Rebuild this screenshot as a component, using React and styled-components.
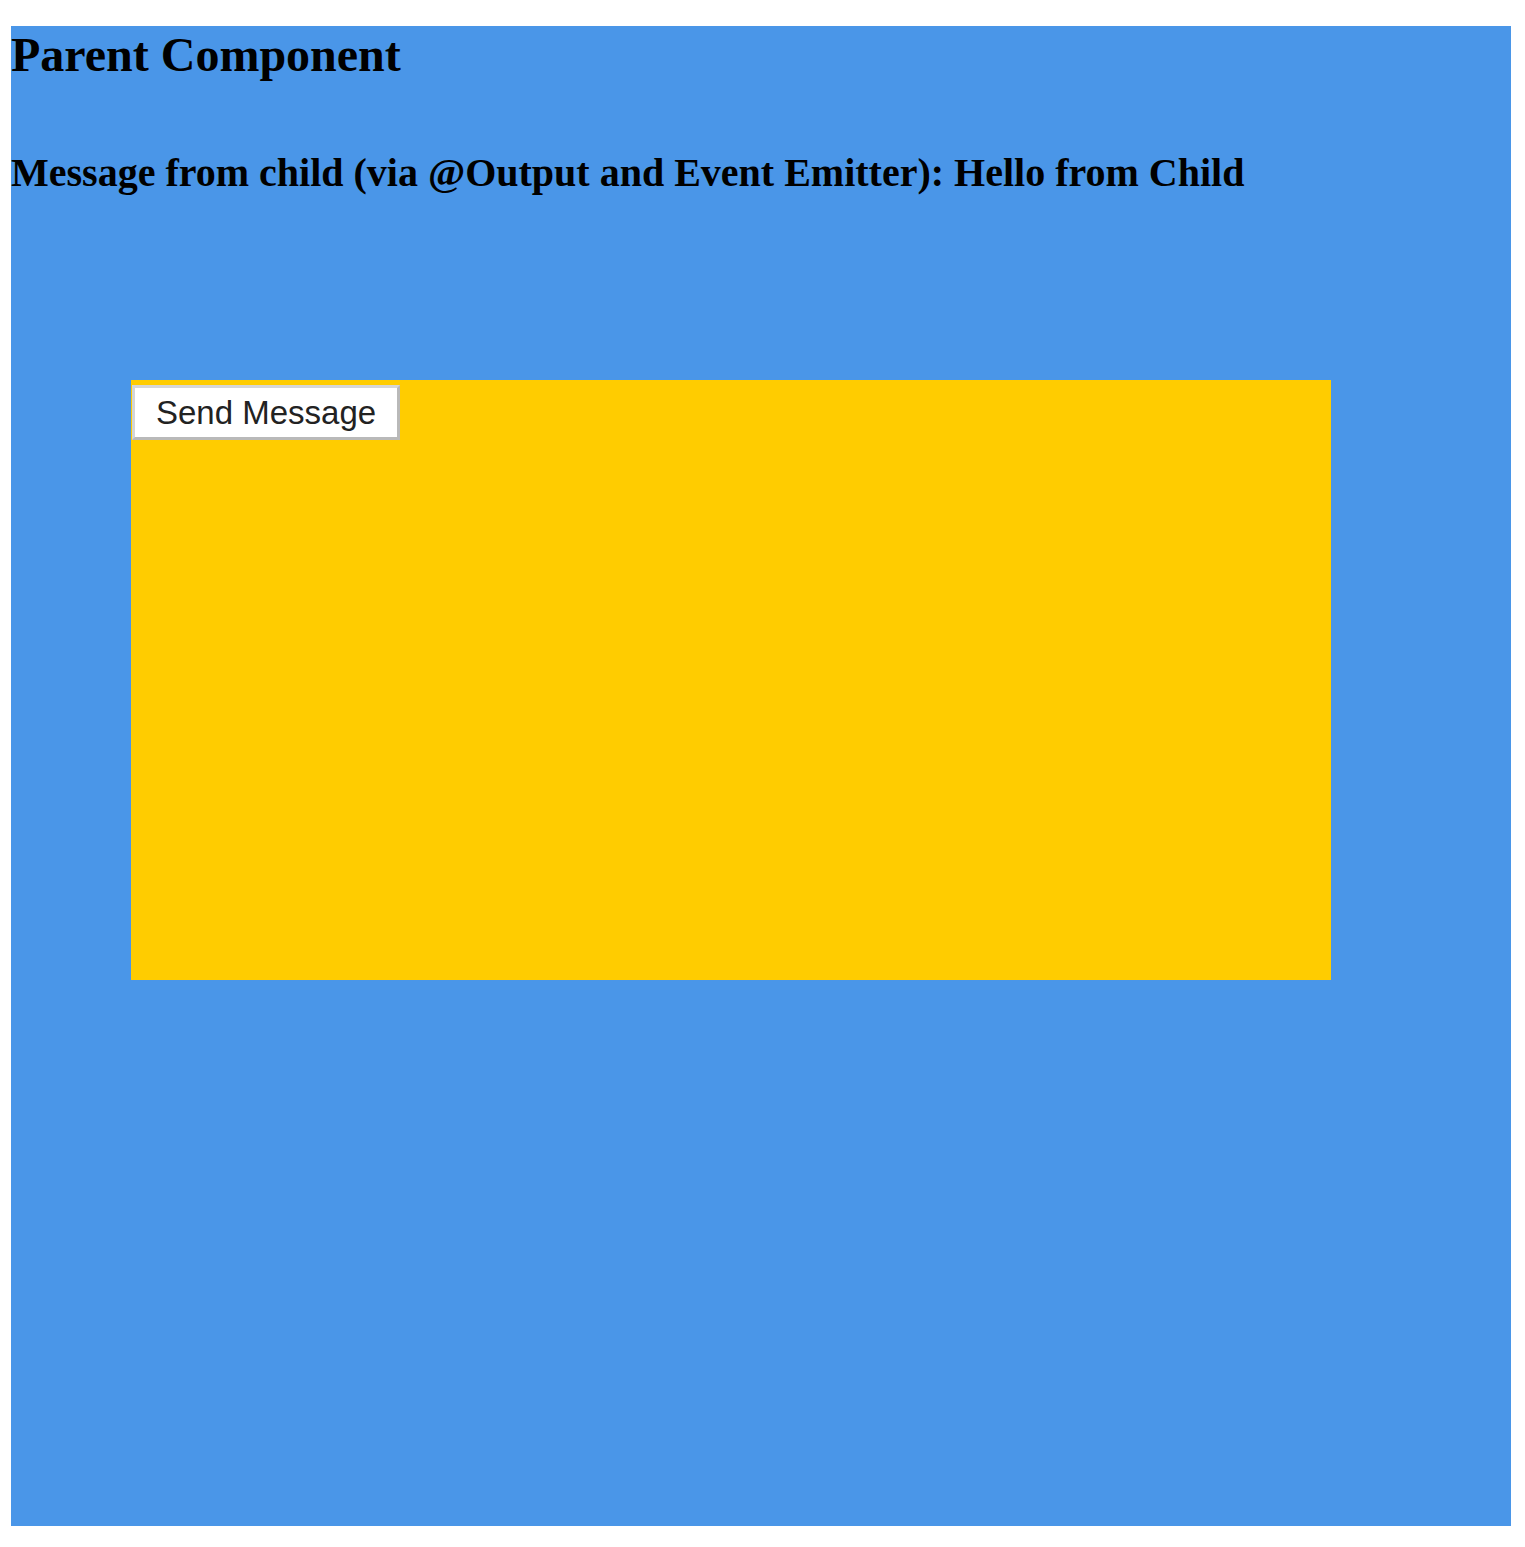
import React, { useState } from "react";
import styled, { createGlobalStyle } from "styled-components";

const Global = createGlobalStyle`
  html, body {
    margin: 0;
    padding: 0;
    background: #ffffff;
  }
`;

const Parent = styled.div`
  box-sizing: border-box;
  width: 1500px;
  height: 1500px;
  margin: 26px 0 0 11px;
  padding-top: 1px;
  background-color: #4a96e8;
  font-family: "Liberation Serif", "Times New Roman", serif;
  color: #000;

  h1 {
    font-size: 48px;
    font-weight: bold;
    margin: 0;
  }

  h2 {
    font-size: 40px;
    font-weight: bold;
    margin: 67px 0 0;
  }
`;

const Child = styled.div`
  box-sizing: border-box;
  width: 1200px;
  height: 600px;
  margin: 184px 0 0 120px;
  padding: 5px 0 0 1px;
  background-color: #ffcc00;
`;

const SendButton = styled.button`
  display: block;
  height: 55px;
  padding: 0 21px;
  background: #ffffff;
  border: 3px solid;
  border-color: #d6d6d6 #b9b9b9 #b9b9b9 #d6d6d6;
  font-family: "Liberation Sans", Arial, sans-serif;
  font-size: 33px;
  color: #222222;
  cursor: pointer;
`;

function ChildComponent({ onSend }) {
  return (
    <Child>
      <SendButton onClick={() => onSend("Hello from Child")}>
        Send Message
      </SendButton>
    </Child>
  );
}

export default function App() {
  const [message, setMessage] = useState("Hello from Child");

  return (
    <>
      <Global />
      <Parent>
        <h1>Parent Component</h1>
        <h2>
          Message from child (via @Output and Event Emitter): {message}
        </h2>
        <ChildComponent onSend={setMessage} />
      </Parent>
    </>
  );
}
